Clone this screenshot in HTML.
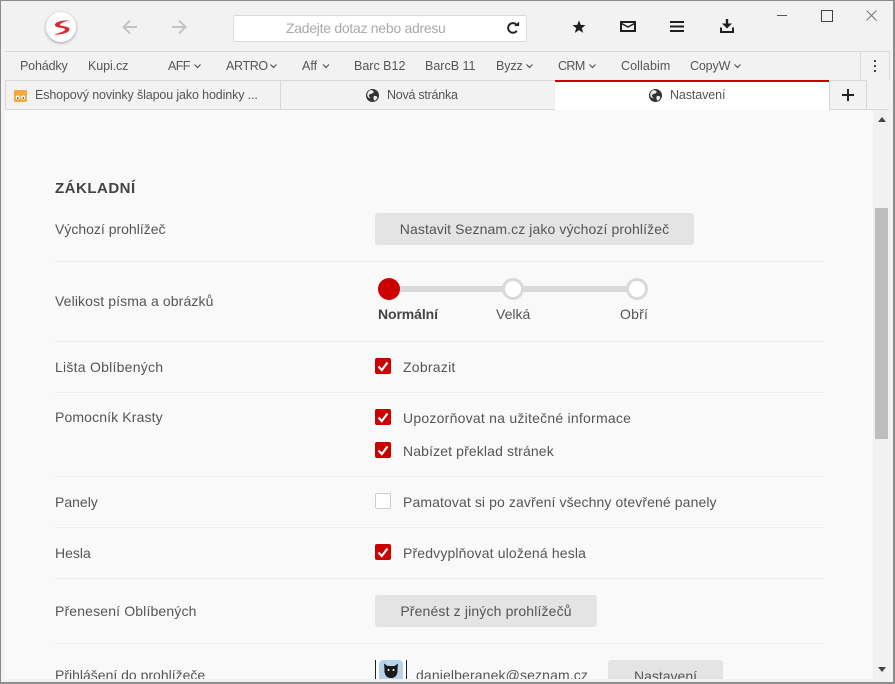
<!DOCTYPE html>
<html lang="cs"><head><meta charset="utf-8"><title>Nastavení</title>
<style>
html,body{margin:0;padding:0}
body{width:895px;height:684px;overflow:hidden;position:relative;background:#f2f2f2;font-family:"Liberation Sans",sans-serif;color:#555;font-size:14px}
.a{position:absolute;white-space:nowrap}
.t{position:absolute;white-space:nowrap;line-height:16px}
.b{position:absolute;background:#e4e4e4;border-radius:3px;color:#555;text-align:center}
.c{position:absolute;left:375px;width:16px;height:16px;background:#cc0000;border-radius:2px}
.bm{font-size:12.5px;color:#555;top:58px}
.ln{left:55px;color:#555;font-size:14px}
.tx{left:403px;color:#555;font-size:14px}
svg{position:absolute;overflow:visible}
</style></head><body>
<!-- window borders -->
<div class="a" style="left:0;top:0;width:895px;height:1px;background:#8c8c8c"></div>
<div class="a" style="left:0;top:0;width:1px;height:684px;background:#8c8c8c"></div>
<div class="a" style="left:893px;top:0;width:2px;height:684px;background:#8c8c8c"></div>
<div class="a" style="left:0;top:682px;width:895px;height:2px;background:#8c8c8c"></div>

<!-- logo -->
<div class="a" style="left:46px;top:12px;width:30px;height:30px;border-radius:50%;background:#fff;box-shadow:0 1px 3px rgba(0,0,0,.35)"></div>
<svg style="left:46px;top:12px" width="30" height="30" viewBox="0 0 30 30"><path d="M23 8.500C17 8 8 10 9 13.500C10 16 17 15.500 19 17C20 19 13 21 8 22.500C15 23 23 21 23.500 17.500C24 14 15 14.500 14 13C14 11 19 9.500 23 8.500Z" fill="#dc2b30"/></svg>

<!-- nav arrows -->
<svg style="left:122px;top:19px" width="16" height="16" viewBox="0 0 16 16" fill="none" stroke="#c4c4c4" stroke-width="2"><path d="M15 8H2M8 1.500L1.500 8L8 14.500"/></svg>
<svg style="left:171px;top:19px" width="16" height="16" viewBox="0 0 16 16" fill="none" stroke="#c4c4c4" stroke-width="2"><path d="M1 8H14M8 1.500L14.500 8L8 14.500"/></svg>

<!-- address bar -->
<div class="a" style="left:233px;top:15px;width:292px;height:25px;background:#fff;border:1px solid #dcdcdc;border-radius:2px"></div>
<div class="t" style="left:286px;top:20px;font-size:14px;color:#aaa;letter-spacing:-.28px">Zadejte dotaz nebo adresu</div>
<svg style="left:506px;top:21px" width="14" height="14" viewBox="0 0 16 16" fill="none"><path d="M12.300 11.300A5.500 5.500 0 1 1 12 4.200" stroke="#222" stroke-width="2.200"/><path d="M9.500 5.800H15V.5Z" fill="#222"/></svg>

<!-- toolbar icons -->
<svg style="left:572px;top:20px" width="14" height="13.500" viewBox="0 0 16 15"><path d="M8 0L10 5.300L15.500 5.600L11.200 9L12.800 14.500L8 11.400L3.200 14.500L4.800 9L.5 5.600L6 5.300Z" fill="#1f1f1f"/></svg>
<svg style="left:620px;top:21px" width="16" height="11" viewBox="0 0 16 11" fill="none" stroke="#1f1f1f" stroke-width="2"><rect x="1" y="1" width="14" height="9"/><path d="M1.500 2.500L8 6L14.500 2.500" stroke-width="1.500"/></svg>
<svg style="left:670px;top:21px" width="14" height="12" viewBox="0 0 14 12" fill="#1f1f1f"><rect width="14" height="2" y="0"/><rect width="14" height="2" y="4.500"/><rect width="14" height="2" y="9"/></svg>
<svg style="left:720px;top:19px" width="14" height="14" viewBox="0 0 14 14" fill="#1f1f1f"><path d="M5.800 0H8.200V4.500H12L7 9.500L2 4.500H5.800Z"/><path d="M0 8.500H2V12H12V8.500H14V14H0Z"/></svg>

<!-- window controls -->
<div class="a" style="left:777px;top:15px;width:10px;height:1px;background:#555"></div>
<div class="a" style="left:821px;top:10px;width:10px;height:10px;border:1px solid #444"></div>
<svg style="left:866px;top:10px" width="11" height="11" viewBox="0 0 11 11" stroke="#777" stroke-width="1" fill="none"><path d="M.5.500L10.500 10.500M10.500.500L.5 10.500"/></svg>

<!-- bookmarks -->
<div class="a" style="left:5px;top:51px;width:856px;height:1px;background:#d8d8d8"></div>
<div class="a" style="left:860px;top:51px;width:28px;height:28px;border:1px solid #dcdcdc;border-bottom:0"></div>
<div class="t bm" style="left:20px;letter-spacing:-.15px">Pohádky</div>
<div class="t bm" style="left:88px;letter-spacing:-.1px">Kupi.cz</div>
<div class="t bm" style="left:168px;letter-spacing:-.6px">AFF</div>
<div class="t bm" style="left:226px;letter-spacing:-.35px">ARTRO</div>
<div class="t bm" style="left:302px">Aff</div>
<div class="t bm" style="left:354px">Barc B12</div>
<div class="t bm" style="left:425px">BarcB 11</div>
<div class="t bm" style="left:496px;letter-spacing:-.1px">Byzz</div>
<div class="t bm" style="left:558px;letter-spacing:-.6px">CRM</div>
<div class="t bm" style="left:621px;letter-spacing:.1px">Collabim</div>
<div class="t bm" style="left:690px;letter-spacing:-.15px">CopyW</div>
<svg style="left:0;top:0" width="895" height="90" fill="none" stroke="#555" stroke-width="1.200">
<path d="M194.500 64.500L197.500 67.500L200.500 64.500M270.500 64.500L273.500 67.500L276.500 64.500M323 64.500L326 67.500L329 64.500M526.500 64.500L529.500 67.500L532.500 64.500M589.500 64.500L592.500 67.500L595.500 64.500M734.500 64.500L737.500 67.500L740.500 64.500"/></svg>
<div class="a" style="left:874px;top:60px;width:2px;height:2px;background:#444;box-shadow:0 5px 0 #444,0 10px 0 #444"></div>

<!-- tabs -->
<div class="a" style="left:5px;top:80px;width:862px;height:1px;background:#d8d8d8"></div>
<div class="a" style="left:5px;top:80px;width:1px;height:30px;background:#d8d8d8"></div>
<div class="a" style="left:5px;top:109px;width:884px;height:1px;background:#d8d8d8"></div>
<div class="a" style="left:280px;top:80px;width:1px;height:30px;background:#d8d8d8"></div>
<div class="a" style="left:555px;top:80px;width:274px;height:30px;background:#fff"></div>
<div class="a" style="left:555px;top:80px;width:274px;height:2px;background:#cc0000"></div>
<div class="a" style="left:829px;top:81px;width:1px;height:29px;background:#d8d8d8"></div>
<div class="a" style="left:866px;top:81px;width:1px;height:29px;background:#d8d8d8"></div>
<svg style="left:14px;top:90px" width="13" height="12" viewBox="0 0 13 12"><rect width="13" height="12" rx="1.500" fill="#f5a93c"/><circle cx="3.800" cy="7.500" r="2" fill="#fff"/><circle cx="9.200" cy="7.500" r="2" fill="#fff"/><circle cx="3.800" cy="8" r=".9" fill="#444"/><circle cx="9.200" cy="8" r=".9" fill="#444"/></svg>
<div class="t" style="left:35px;top:87px;font-size:12.5px;color:#555;letter-spacing:-.13px">Eshopový novinky šlapou jako hodinky ...</div>
<svg style="left:366px;top:89px" width="13" height="13" viewBox="0 0 13 13"><circle cx="6.500" cy="6.500" r="6.500" fill="#333"/><path d="M4 1.200C6 1 8 2 7.500 3.500C6.500 5 4 4.500 3 6C2.500 7.500 4 8 4.500 9.500C3 9 1.200 8 1.200 6C1.200 4 2.500 2 4 1.200ZM8 7C9.500 6.500 11 7 11.500 8.500C10.500 10.500 9.500 11.300 8.500 11.700C7.500 10.500 7 8.500 8 7Z" fill="#eee"/></svg>
<div class="t" style="left:387px;top:87px;font-size:12.5px;color:#555;letter-spacing:-.25px">Nová stránka</div>
<svg style="left:649px;top:89px" width="13" height="13" viewBox="0 0 13 13"><circle cx="6.500" cy="6.500" r="6.500" fill="#333"/><path d="M4 1.200C6 1 8 2 7.500 3.500C6.500 5 4 4.500 3 6C2.500 7.500 4 8 4.500 9.500C3 9 1.200 8 1.200 6C1.200 4 2.500 2 4 1.200ZM8 7C9.500 6.500 11 7 11.500 8.500C10.500 10.500 9.500 11.300 8.500 11.700C7.500 10.500 7 8.500 8 7Z" fill="#eee"/></svg>
<div class="t" style="left:670px;top:87px;font-size:12.5px;color:#555;letter-spacing:-.1px">Nastavení</div>
<svg style="left:842px;top:89px" width="12" height="12" viewBox="0 0 12 12" fill="#222"><rect x="5" y="0" width="2" height="12"/><rect x="0" y="5" width="12" height="2"/></svg>

<!-- content -->
<div class="a" style="left:5px;top:110px;width:868px;height:569px;background:#f9f9f9;overflow:hidden">
<div class="a" style="left:50px;top:151px;width:769px;height:1px;background:#ededed"></div>
<div class="a" style="left:50px;top:231px;width:769px;height:1px;background:#ededed"></div>
<div class="a" style="left:50px;top:282px;width:769px;height:1px;background:#ededed"></div>
<div class="a" style="left:50px;top:366px;width:769px;height:1px;background:#ededed"></div>
<div class="a" style="left:50px;top:417px;width:769px;height:1px;background:#ededed"></div>
<div class="a" style="left:50px;top:468px;width:769px;height:1px;background:#ededed"></div>
<div class="a" style="left:50px;top:533px;width:769px;height:1px;background:#ededed"></div>
</div>
<div class="t" style="left:55px;top:181px;font-size:15px;font-weight:bold;color:#444;letter-spacing:.5px">ZÁKLADNÍ</div>

<div class="t ln" style="top:221px">Výchozí prohlížeč</div>
<div class="t ln" style="top:293px;letter-spacing:.12px">Velikost písma a obrázků</div>
<div class="t ln" style="top:359px;letter-spacing:.25px">Lišta Oblíbených</div>
<div class="t ln" style="top:409px;letter-spacing:.13px">Pomocník Krasty</div>
<div class="t ln" style="top:494px">Panely</div>
<div class="t ln" style="top:545px">Hesla</div>
<div class="t ln" style="top:603px;letter-spacing:.15px">Přenesení Oblíbených</div>

<div class="b" style="left:375px;top:213px;width:319px;height:32px;line-height:32px;letter-spacing:.1px">Nastavit Seznam.cz jako výchozí prohlížeč</div>

<!-- slider -->
<div class="a" style="left:389px;top:286px;width:248px;height:6px;background:#d9d9d9"></div>
<div class="a" style="left:378px;top:278px;width:22px;height:22px;border-radius:50%;background:#cc0000"></div>
<div class="a" style="left:502px;top:278px;width:16px;height:16px;border:3px solid #d9d9d9;border-radius:50%;background:#fff"></div>
<div class="a" style="left:626px;top:278px;width:16px;height:16px;border:3px solid #d9d9d9;border-radius:50%;background:#fff"></div>
<div class="t" style="left:378px;top:306px;font-weight:bold;color:#444;letter-spacing:-.1px">Normální</div>
<div class="t" style="left:496px;top:306px">Velká</div>
<div class="t" style="left:620px;top:306px;letter-spacing:.2px">Obří</div>

<!-- checkboxes -->
<div class="c" style="top:358px"></div>
<div class="c" style="top:409px"></div>
<div class="c" style="top:442px"></div>
<div class="a" style="left:375px;top:493px;width:14px;height:14px;background:#fff;border:1px solid #ccc;border-radius:2px"></div>
<div class="c" style="top:544px"></div>
<svg style="left:375px;top:0" width="16" height="600" fill="none" stroke="#fff" stroke-width="2.200">
<path d="M3.500 366.500L6.800 370L12.500 362.500M3.500 417.500L6.800 421L12.500 413.500M3.500 450.500L6.800 454L12.500 446.500M3.500 552.500L6.800 556L12.500 548.500"/></svg>
<div class="t tx" style="top:359px;letter-spacing:.25px">Zobrazit</div>
<div class="t tx" style="top:410px;letter-spacing:.24px">Upozorňovat na užitečné informace</div>
<div class="t tx" style="top:443px;letter-spacing:.13px">Nabízet překlad stránek</div>
<div class="t tx" style="top:494px;letter-spacing:.1px">Pamatovat si po zavření všechny otevřené panely</div>
<div class="t tx" style="top:545px;letter-spacing:.15px">Předvyplňovat uložená hesla</div>

<div class="b" style="left:375px;top:595px;width:222px;height:32px;line-height:32px;letter-spacing:.15px">Přenést z jiných prohlížečů</div>

<!-- bottom row clipped -->
<div class="a" style="left:0;top:655px;width:873px;height:24px;overflow:hidden">
<div class="a" style="left:375px;top:5px;width:32px;height:32px;background:#fff"></div>
<div class="a" style="left:375px;top:5px;width:1px;height:32px;background:#222"></div>
<div class="a" style="left:406px;top:5px;width:1px;height:32px;background:#222"></div>
<div class="a" style="left:379px;top:5px;width:24px;height:24px;background:#b7d3ea;border-radius:4px"></div>
<svg style="left:379px;top:5px" width="24" height="20" viewBox="0 0 24 20"><path d="M5 3.500L8.500 6H15.500L19 3.500L18.500 9C19 14 17 18 12 18C7 18 5 14 5.500 9Z" fill="#1a1a1a"/><circle cx="9.500" cy="10" r="1" fill="#fff"/><circle cx="14.500" cy="10" r="1" fill="#fff"/></svg>
<div class="t" style="left:416px;top:12px;color:#555;letter-spacing:.13px">danielberanek@seznam.cz</div>
<div class="b" style="left:608px;top:5px;width:115px;height:32px;line-height:32px">Nastavení</div>
<div class="t" style="left:55px;top:12px">Přihlášení do prohlížeče</div>
</div>

<!-- scrollbar -->
<div class="a" style="left:873px;top:110px;width:16px;height:569px;background:#f1f1f1"></div>
<div class="a" style="left:875px;top:208px;width:13px;height:231px;background:#bdbdbd"></div>
<svg style="left:878px;top:117px" width="8" height="5" viewBox="0 0 8 5"><path d="M4 0L8 5H0Z" fill="#444"/></svg>
<svg style="left:878px;top:667px" width="8" height="5" viewBox="0 0 8 5"><path d="M4 5L8 0H0Z" fill="#444"/></svg>
</body></html>
